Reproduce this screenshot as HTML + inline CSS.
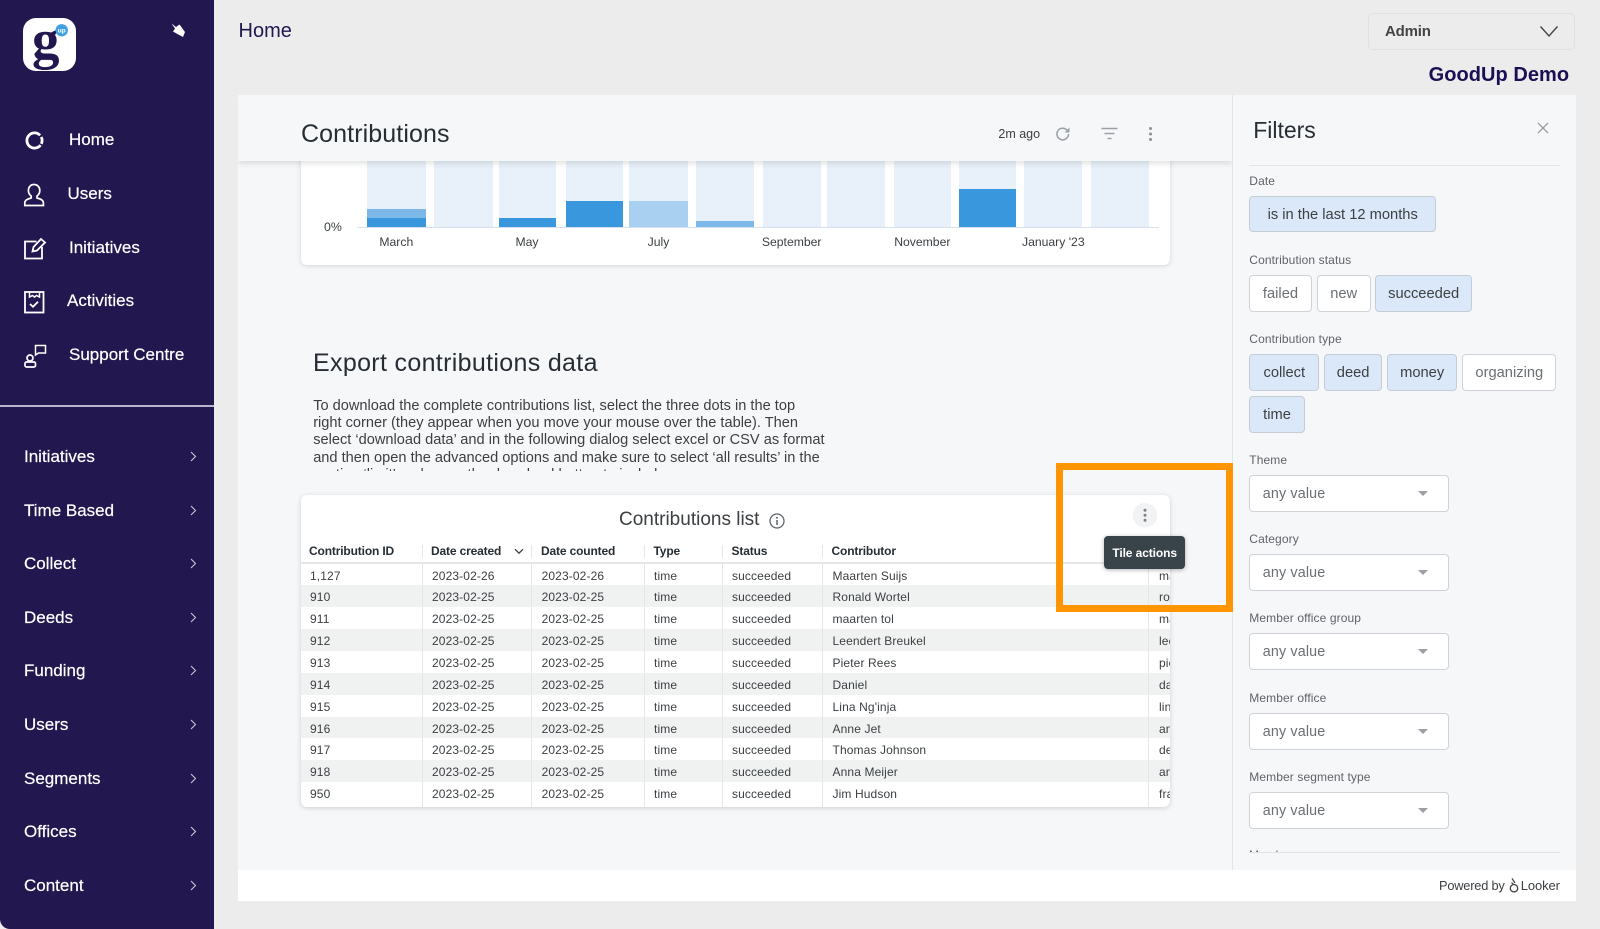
<!DOCTYPE html>
<html lang="en"><head><meta charset="utf-8"><title>Home</title>
<style>
*{box-sizing:border-box}
html,body{margin:0;padding:0;width:1600px;height:929px;overflow:hidden;background:#ececec;font-family:"Liberation Sans",Arial,sans-serif}
.a{position:absolute}
.t{position:absolute;white-space:nowrap;line-height:20px;height:20px}
#side{left:0;top:0;width:214px;height:929px;background:#22174f;border-bottom-left-radius:10px}
.n{color:#fff;font-size:17px;-webkit-text-stroke:.2px #fff;margin-top:.7px}
.ch{position:absolute;left:190px;width:7px;height:11px}
.lb{font-size:12px;color:#5f6368;left:1249.3px;letter-spacing:.1px}
.chip{position:absolute;height:36.6px;line-height:36px;text-align:center;font-size:14.7px;border:1px solid #cfd3d8;border-radius:4px;background:#fff;color:#6a6f74;white-space:nowrap}
.on{background:#dbe8f9;color:#3c4043;border-color:#c6ccd4}
.sel{position:absolute;left:1249.3px;width:199.4px;height:37px;background:#fff;border:1px solid #cfd3d8;border-radius:4px;font-size:14.3px;line-height:36px;color:#6a6f74;padding-left:12.5px;letter-spacing:.15px}
.sel i{position:absolute;left:168px;top:15px;width:0;height:0;border-left:5.5px solid transparent;border-right:5.5px solid transparent;border-top:5.5px solid #9aa0a6}
.bar{position:absolute;top:161px;height:66px;background:#e8f0fa;overflow:hidden}
.bar i{position:absolute;left:0;right:0;display:block}
.xl{position:absolute;top:232px;width:120px;text-align:center;font-size:12.2px;line-height:20px;color:#3c4043;white-space:nowrap}
#card{left:301px;top:495px;width:869px;height:312px;background:#fff;border-radius:6px;box-shadow:0 1px 5px rgba(60,64,67,.22);overflow:hidden}
.h{position:absolute;top:46px;font-size:12px;font-weight:bold;color:#262d33;line-height:20px;white-space:nowrap;letter-spacing:-.15px}
.sp{position:absolute;top:50px;width:1px;height:13px;background:#e4e6e8}
.r{position:absolute;left:0;width:869px;height:21.87px;font-size:12px;line-height:24px;color:#3c4043;letter-spacing:.12px}
.r:nth-child(even){background:#f0f2f2}
.r span{position:absolute;top:0;white-space:nowrap}
.c1{left:9px}.c2{left:131px}.c3{left:240.6px}.c4{left:353px}.c5{left:431px}.c6{left:531.5px}.c7{left:858px}
.v{position:absolute;top:69px;width:1px;height:243px;background:#e4e6e8}
</style></head><body>

<div class="a" id="side"></div>
<div class="a" style="left:0;top:405px;width:214px;height:2px;background:#b9b5cb"></div>

<svg class="a" style="left:0;top:0" width="214" height="400" viewBox="0 0 214 400">
<rect x="23" y="18" width="53" height="53" rx="13" fill="#fff"/>
<text x="32" y="58" font-family="Liberation Serif" font-weight="bold" font-size="55" fill="#22174f">g</text>
<circle cx="61.7" cy="30.3" r="6.2" fill="#3f9fe0"/>
<text x="61.7" y="32.6" text-anchor="middle" font-family="Liberation Sans" font-weight="bold" font-size="6.5" fill="#fff">up</text>
<path d="M171.5 23.5L176 27L179.500 24.500L185 32L183 37L176.500 33.500L173 31.500L175 28.500Z" fill="#fff"/>
<g fill="none" stroke="#fff" stroke-width="2">
<circle cx="34.500" cy="140.500" r="7.600" stroke-width="2.800" stroke-dasharray="3.500 1.500 36.800 2 4 0"/>
<path d="M34 184.500c3.500 0 5.800 2.700 5.800 6 0 2.500-1.200 4.300-2.800 5.500v2c3 .8 6.400 1.800 6.400 5v2.500H24.800V203c0-3.200 3.400-4.200 6.400-5v-2c-1.600-1.200-2.800-3-2.800-5.500 0-3.300 2.100-6 5.600-6z" stroke-width="1.700"/>
<path d="M36.500 241.500H25v17h17V247" stroke-width="1.800"/>
<path d="M32.500 251.500l1-4.500 7.500-8 4 3.500-8 8z" stroke-width="1.800"/>
<rect x="25" y="292" width="18.500" height="20.500" stroke-width="1.800"/>
<path d="M29.500 292v5l3-1.500 2 1.500 2-1.500 3 1.500v-5" stroke-width="1.500"/>
<path d="M30 304l3 2.800 5-5" stroke-width="1.800"/>
<circle cx="30" cy="358" r="3" stroke-width="1.700"/>
<rect x="25" y="362" width="10.500" height="5" rx="1.500" stroke-width="1.700"/>
<path d="M35.500 345.500h10v7.500h-7l-3 2z" stroke-width="1.500"/>
</g>
</svg>

<div class="t n" style="left:69px;top:129.500px">Home</div>
<div class="t n" style="left:67.500px;top:183px">Users</div>
<div class="t n" style="left:69px;top:237px">Initiatives</div>
<div class="t n" style="left:67px;top:290.500px">Activities</div>
<div class="t n" style="left:69px;top:344.700px">Support Centre</div>

<div class="t n" style="left:24px;top:446.500px">Initiatives</div>
<div class="t n" style="left:24px;top:500px">Time Based</div>
<div class="t n" style="left:24px;top:553.700px">Collect</div>
<div class="t n" style="left:24px;top:607px">Deeds</div>
<div class="t n" style="left:24px;top:660.700px">Funding</div>
<div class="t n" style="left:24px;top:714.300px">Users</div>
<div class="t n" style="left:24px;top:768px">Segments</div>
<div class="t n" style="left:24px;top:821.700px">Offices</div>
<div class="t n" style="left:24px;top:875.300px">Content</div>

<svg class="ch" style="top:451px" viewBox="0 0 7 11"><path d="M1 1l4.500 4.500L1 10" fill="none" stroke="#c9c6d6" stroke-width="1.100"/></svg>
<svg class="ch" style="top:504.500px" viewBox="0 0 7 11"><path d="M1 1l4.500 4.500L1 10" fill="none" stroke="#c9c6d6" stroke-width="1.100"/></svg>
<svg class="ch" style="top:558px" viewBox="0 0 7 11"><path d="M1 1l4.500 4.500L1 10" fill="none" stroke="#c9c6d6" stroke-width="1.100"/></svg>
<svg class="ch" style="top:611.500px" viewBox="0 0 7 11"><path d="M1 1l4.500 4.500L1 10" fill="none" stroke="#c9c6d6" stroke-width="1.100"/></svg>
<svg class="ch" style="top:665px" viewBox="0 0 7 11"><path d="M1 1l4.500 4.500L1 10" fill="none" stroke="#c9c6d6" stroke-width="1.100"/></svg>
<svg class="ch" style="top:718.500px" viewBox="0 0 7 11"><path d="M1 1l4.500 4.500L1 10" fill="none" stroke="#c9c6d6" stroke-width="1.100"/></svg>
<svg class="ch" style="top:772.500px" viewBox="0 0 7 11"><path d="M1 1l4.500 4.500L1 10" fill="none" stroke="#c9c6d6" stroke-width="1.100"/></svg>
<svg class="ch" style="top:826px" viewBox="0 0 7 11"><path d="M1 1l4.500 4.500L1 10" fill="none" stroke="#c9c6d6" stroke-width="1.100"/></svg>
<svg class="ch" style="top:880px" viewBox="0 0 7 11"><path d="M1 1l4.500 4.500L1 10" fill="none" stroke="#c9c6d6" stroke-width="1.100"/></svg>

<div class="t" style="left:238.500px;top:21px;font-size:20px;color:#22174f">Home</div>

<div class="a" style="left:1368px;top:12.500px;width:207px;height:37.500px;border:1px solid #e0e0e0;border-radius:5px"></div>
<div class="t" style="left:1385px;top:21.800px;font-size:15px;font-weight:bold;color:#444;letter-spacing:-.2px">Admin</div>
<svg class="a" style="left:1539px;top:25px" width="20" height="13" viewBox="0 0 20 13"><path d="M1.500 1.500L10 11l8.500-9.500" fill="none" stroke="#444" stroke-width="1.400"/></svg>
<div class="t" style="left:1428.600px;top:65px;font-size:20px;font-weight:bold;color:#1c0f52;letter-spacing:.05px">GoodUp Demo</div>

<!-- panel -->
<div class="a" style="left:238.300px;top:95px;width:1337.700px;height:775px;background:#f6f7f9"></div>
<div class="a" style="left:238.300px;top:870px;width:1337.700px;height:31px;background:#fff"></div>
<div class="t" style="left:1439px;top:875.500px;font-size:12.800px;color:#3c4043;letter-spacing:-.2px">Powered by</div>
<svg class="a" style="left:1509px;top:877px" width="10" height="17" viewBox="0 0 10 17"><circle cx="5" cy="11.200" r="3.700" fill="none" stroke="#3c4043" stroke-width="1.300"/><path d="M3 1.500l3 4.500M2.500 5.500l2 2" fill="none" stroke="#3c4043" stroke-width="1.200"/></svg>
<div class="t" style="left:1520.700px;top:875.500px;font-size:13px;color:#3c4043;letter-spacing:-.1px">Looker</div>

<!-- chart -->
<div class="a" style="left:301px;top:140px;width:869px;height:125px;background:#fff;border-radius:6px;box-shadow:0 1px 5px rgba(60,64,67,.18)"></div>
<div class="a" style="left:356.500px;top:226.500px;width:802.500px;height:1.500px;background:#d5e0f0"></div>
<div class="bar" style="left:367px;width:59px"><i style="top:48px;height:9.300px;background:#7db9e8"></i><i style="top:57.300px;height:8.700px;background:#3897dd"></i></div>
<div class="bar" style="left:434px;width:59px"></div>
<div class="bar" style="left:498.500px;width:57.500px"><i style="top:57.300px;height:8.700px;background:#3897dd"></i></div>
<div class="bar" style="left:566px;width:57px"><i style="top:40px;height:26px;background:#3897dd"></i></div>
<div class="bar" style="left:629px;width:58.600px"><i style="top:40px;height:26px;background:#a9d0f1"></i></div>
<div class="bar" style="left:696px;width:58px"><i style="top:59.700px;height:6.300px;background:#7db9e8"></i></div>
<div class="bar" style="left:762.600px;width:58.400px"></div>
<div class="bar" style="left:827px;width:58px"></div>
<div class="bar" style="left:894px;width:57px"></div>
<div class="bar" style="left:959px;width:56.700px"><i style="top:28px;height:38px;background:#3897dd"></i></div>
<div class="bar" style="left:1024px;width:58px"></div>
<div class="bar" style="left:1091px;width:58px"></div>
<div class="t" style="left:324px;top:216.600px;font-size:12.300px;color:#3c4043">0%</div>
<div class="xl" style="left:336.300px">March</div>
<div class="xl" style="left:467px">May</div>
<div class="xl" style="left:598.500px">July</div>
<div class="xl" style="left:731.700px">September</div>
<div class="xl" style="left:862.300px">November</div>
<div class="xl" style="left:993.300px">January '23</div>

<!-- top bar -->
<div class="a" style="left:238.300px;top:95px;width:994px;height:66px;background:#f6f7f9;box-shadow:0 2px 6px rgba(60,64,67,.18);clip-path:inset(0 0 -10px 0)"></div>
<div class="t" style="left:301px;top:123.500px;font-size:25px;color:#262d33;letter-spacing:.1px">Contributions</div>
<div class="t" style="left:998.400px;top:124px;font-size:12.500px;color:#3c4043">2m ago</div>
<svg class="a" style="left:1054px;top:125px" width="18" height="18" viewBox="0 0 18 18"><path d="M14.500 9a5.800 5.800 0 1 1-1.700-4.100L15 7" fill="none" stroke="#9aa0a6" stroke-width="1.500"/><path d="M15.500 2.500V7.500H10.500z" fill="#9aa0a6"/></svg>
<svg class="a" style="left:1101px;top:127px" width="17" height="14" viewBox="0 0 17 14"><path d="M.5 1.500h16M3.500 6.500h10M6.500 11.500h4" stroke="#9aa0a6" stroke-width="1.400" fill="none"/></svg>
<svg class="a" style="left:1148px;top:126px" width="5" height="16" viewBox="0 0 5 16"><circle cx="2.500" cy="2.500" r="1.500" fill="#8b9094"/><circle cx="2.500" cy="8" r="1.500" fill="#8b9094"/><circle cx="2.500" cy="13.500" r="1.500" fill="#8b9094"/></svg>

<!-- export text -->
<div class="t" style="left:313px;top:353.300px;font-size:25px;color:#262d33;letter-spacing:.33px">Export contributions data</div>
<div class="a" style="left:313.200px;top:398px;width:560px;height:73px;overflow:hidden">
<div style="font-size:14.600px;line-height:17.200px;color:#3c4043;white-space:nowrap">To download the complete contributions list, select the three dots in the top<br>right corner (they appear when you move your mouse over the table). Then<br>select ‘download data’ and in the following dialog select excel or CSV as format<br>and then open the advanced options and make sure to select ‘all results’ in the<br>section ‘limit’ and press the download button to include.</div>
</div>

<!-- table card -->
<div class="a" id="card">
<div class="t" style="left:318px;top:15px;font-size:19px;color:#3c4043">Contributions list</div>
<div class="h" style="left:8px">Contribution ID</div>
<div class="h" style="left:130px">Date created</div>
<div class="h" style="left:240px">Date counted</div>
<div class="h" style="left:352.500px">Type</div>
<div class="h" style="left:430.500px">Status</div>
<div class="h" style="left:530.500px">Contributor</div>
<div class="sp" style="left:121px"></div><div class="sp" style="left:230px"></div><div class="sp" style="left:343px"></div><div class="sp" style="left:421px"></div><div class="sp" style="left:521px"></div>
<div class="a" style="left:0;top:67px;width:869px;height:1.500px;background:#e4e6e8"></div>
<div class="a" style="left:0;top:68.500px;width:869px;height:244px">
<div class="r" style="top:0"><span class="c1">1,127</span><span class="c2">2023-02-26</span><span class="c3">2023-02-26</span><span class="c4">time</span><span class="c5">succeeded</span><span class="c6">Maarten Suijs</span><span class="c7">maarten</span></div>
<div class="r" style="top:21.870px"><span class="c1">910</span><span class="c2">2023-02-25</span><span class="c3">2023-02-25</span><span class="c4">time</span><span class="c5">succeeded</span><span class="c6">Ronald Wortel</span><span class="c7">ronald</span></div>
<div class="r" style="top:43.740px"><span class="c1">911</span><span class="c2">2023-02-25</span><span class="c3">2023-02-25</span><span class="c4">time</span><span class="c5">succeeded</span><span class="c6">maarten tol</span><span class="c7">maarten</span></div>
<div class="r" style="top:65.610px"><span class="c1">912</span><span class="c2">2023-02-25</span><span class="c3">2023-02-25</span><span class="c4">time</span><span class="c5">succeeded</span><span class="c6">Leendert Breukel</span><span class="c7">leendert</span></div>
<div class="r" style="top:87.480px"><span class="c1">913</span><span class="c2">2023-02-25</span><span class="c3">2023-02-25</span><span class="c4">time</span><span class="c5">succeeded</span><span class="c6">Pieter Rees</span><span class="c7">pieter</span></div>
<div class="r" style="top:109.350px"><span class="c1">914</span><span class="c2">2023-02-25</span><span class="c3">2023-02-25</span><span class="c4">time</span><span class="c5">succeeded</span><span class="c6">Daniel</span><span class="c7">daniel</span></div>
<div class="r" style="top:131.220px"><span class="c1">915</span><span class="c2">2023-02-25</span><span class="c3">2023-02-25</span><span class="c4">time</span><span class="c5">succeeded</span><span class="c6">Lina Ng'inja</span><span class="c7">lina</span></div>
<div class="r" style="top:153.090px"><span class="c1">916</span><span class="c2">2023-02-25</span><span class="c3">2023-02-25</span><span class="c4">time</span><span class="c5">succeeded</span><span class="c6">Anne Jet</span><span class="c7">anne</span></div>
<div class="r" style="top:174.960px"><span class="c1">917</span><span class="c2">2023-02-25</span><span class="c3">2023-02-25</span><span class="c4">time</span><span class="c5">succeeded</span><span class="c6">Thomas Johnson</span><span class="c7">demo</span></div>
<div class="r" style="top:196.830px"><span class="c1">918</span><span class="c2">2023-02-25</span><span class="c3">2023-02-25</span><span class="c4">time</span><span class="c5">succeeded</span><span class="c6">Anna Meijer</span><span class="c7">anna</span></div>
<div class="r" style="top:218.700px"><span class="c1">950</span><span class="c2">2023-02-25</span><span class="c3">2023-02-25</span><span class="c4">time</span><span class="c5">succeeded</span><span class="c6">Jim Hudson</span><span class="c7">frank</span></div>
</div>
<div class="v" style="left:121px"></div><div class="v" style="left:230px"></div><div class="v" style="left:343px"></div><div class="v" style="left:421px"></div><div class="v" style="left:521px"></div><div class="v" style="left:847px"></div>
</div>
<svg class="a" style="left:769px;top:512.500px" width="16" height="16" viewBox="0 0 16 16"><circle cx="8" cy="8" r="7" fill="none" stroke="#5f6368" stroke-width="1.300"/><circle cx="8" cy="4.800" r="1" fill="#5f6368"/><path d="M8 7v5" stroke="#5f6368" stroke-width="1.500"/></svg>
<svg class="a" style="left:514px;top:548px" width="10" height="7" viewBox="0 0 10 7"><path d="M1 1.200l4 4 4-4" fill="none" stroke="#3c4043" stroke-width="1.300"/></svg>
<svg class="a" style="left:1132px;top:503px" width="26" height="25" viewBox="0 0 26 25"><circle cx="13" cy="12.300" r="12.300" fill="#f1f3f4"/><circle cx="13" cy="7.300" r="1.500" fill="#7d8387"/><circle cx="13" cy="12.300" r="1.500" fill="#7d8387"/><circle cx="13" cy="17.300" r="1.500" fill="#7d8387"/></svg>

<!-- filters -->
<div class="a" style="left:1232px;top:95px;width:1px;height:775px;background:#e3e6e9"></div>
<div class="t" style="left:1253.200px;top:119.500px;font-size:23px;color:#262d33">Filters</div>
<svg class="a" style="left:1537px;top:122px" width="12" height="12" viewBox="0 0 12 12"><path d="M1 1l10 10M11 1L1 11" stroke="#9aa0a6" stroke-width="1.300" fill="none"/></svg>
<div class="a" style="left:1249.400px;top:165px;width:310.600px;height:1.200px;background:#e3e6e9"></div>

<div class="t lb" style="top:171px">Date</div>
<div class="chip on" style="left:1249.300px;top:195.700px;width:186.800px">is in the last 12 months</div>

<div class="t lb" style="top:250px">Contribution status</div>
<div class="chip" style="left:1249.300px;top:275.300px;width:62.400px">failed</div>
<div class="chip" style="left:1316.700px;top:275.300px;width:54px">new</div>
<div class="chip on" style="left:1375.300px;top:275.300px;width:96.700px">succeeded</div>

<div class="t lb" style="top:329.300px">Contribution type</div>
<div class="chip on" style="left:1249.300px;top:354.400px;width:70px">collect</div>
<div class="chip on" style="left:1324px;top:354.400px;width:58.300px">deed</div>
<div class="chip on" style="left:1387px;top:354.400px;width:70.300px">money</div>
<div class="chip" style="left:1462.300px;top:354.400px;width:94px">organizing</div>
<div class="chip on" style="left:1249.300px;top:396px;width:55.400px">time</div>

<div class="t lb" style="top:450px">Theme</div>
<div class="sel" style="top:475px">any value<i></i></div>
<div class="t lb" style="top:529.300px">Category</div>
<div class="sel" style="top:554px">any value<i></i></div>
<div class="t lb" style="top:608.300px">Member office group</div>
<div class="sel" style="top:633.300px">any value<i></i></div>
<div class="t lb" style="top:687.700px">Member office</div>
<div class="sel" style="top:712.700px">any value<i></i></div>
<div class="t lb" style="top:767px">Member segment type</div>
<div class="sel" style="top:792px">any value<i></i></div>
<div class="a" style="left:1249px;top:848px;width:311px;height:4px;overflow:hidden"><div style="font-size:12px;line-height:16px;color:#5f6368;margin-top:-1px">Member</div></div>
<div class="a" style="left:1249.400px;top:852px;width:310.600px;height:1px;background:#e0e3e6"></div>

<!-- highlight frame + tooltip -->
<div class="a" style="left:1056.300px;top:462.700px;width:176.400px;height:149px;border:7.300px solid #ff9500"></div>
<div class="a" style="left:1104.300px;top:536.300px;width:80.700px;height:33px;background:#39444a;border-radius:4px;box-shadow:0 1px 4px rgba(0,0,0,.3);color:#fff;font-size:12px;font-weight:bold;line-height:34.500px;text-align:center;letter-spacing:-.1px">Tile actions</div>
</body></html>
